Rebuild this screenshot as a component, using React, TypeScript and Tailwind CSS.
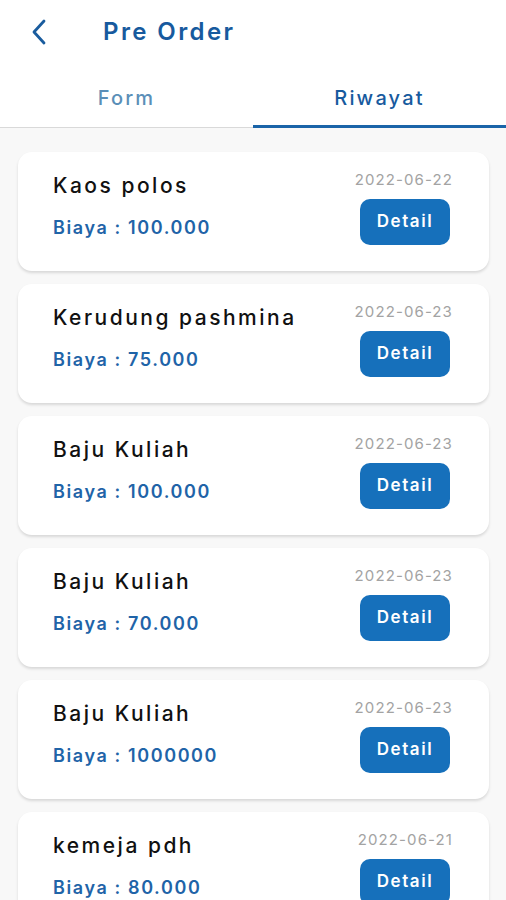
import React from "react";

const items = [
  { name: "Kaos polos", cost: "100.000", date: "2022-06-22" },
  { name: "Kerudung pashmina", cost: "75.000", date: "2022-06-23" },
  { name: "Baju Kuliah", cost: "100.000", date: "2022-06-23" },
  { name: "Baju Kuliah", cost: "70.000", date: "2022-06-23" },
  { name: "Baju Kuliah", cost: "1000000", date: "2022-06-23" },
  { name: "kemeja pdh", cost: "80.000", date: "2022-06-21" },
];

export default function App() {
  return (
    <div
      className="w-[506px] h-[900px] overflow-hidden bg-[#f8f8f8] flex flex-col"
      style={{ fontFamily: "Inter, 'Noto Sans', sans-serif" }}
    >
      <div className="bg-white">
        <div className="h-[64px] flex items-center">
          <div className="w-[103px] flex items-center pl-[30px]">
            <svg width="20" height="26" viewBox="0 0 20 26" fill="none">
              <path d="M14 2 L4 13 L14 24" stroke="#1a5c9e" strokeWidth="2.8" strokeLinecap="round" strokeLinejoin="round" />
            </svg>
          </div>
          <div className="text-[24px] font-semibold text-[#175a9e] tracking-[2.4px]">Pre Order</div>
        </div>
        <div className="h-[64px] flex">
          <div className="flex-1 flex items-center justify-center text-[20px] font-medium text-[#5b8fb8] border-b border-[#d9d9d9] pt-[4px] tracking-[2.2px]">
            Form
          </div>
          <div className="flex-1 flex items-center justify-center text-[20px] font-medium text-[#175a9e] border-b-[3px] border-[#1a64a8] pt-[6px] tracking-[2.2px]">
            Riwayat
          </div>
        </div>
      </div>
      <div className="flex flex-col gap-[13px] px-[18px] pt-[24px] pr-[17px]">
        {items.map((it, i) => (
          <div
            key={i}
            className="h-[119px] shrink-0 bg-white rounded-[14px] shadow-[0_2px_3px_rgba(0,0,0,0.13)] flex justify-between pl-[35px] pr-[36px]"
          >
            <div className="flex flex-col pt-[20px]">
              <div className="text-[21px] font-medium text-[#111] leading-[28px] tracking-[2.5px]">{it.name}</div>
              <div className="text-[18px] font-semibold text-[#1f64a8] leading-[26px] mt-[15px] tracking-[1.6px]">Biaya : {it.cost}</div>
            </div>
            <div className="flex flex-col items-end pt-[18px]">
              <div className="text-[15px] text-[#a3a3a3] leading-[20px] tracking-[1.1px]">{it.date}</div>
              <div className="mt-[9px] mr-[3px] w-[90px] h-[46px] rounded-[10px] bg-[#1670bb] text-white text-[17px] font-semibold flex items-center justify-center tracking-[1.6px]">
                Detail
              </div>
            </div>
          </div>
        ))}
      </div>
    </div>
  );
}
